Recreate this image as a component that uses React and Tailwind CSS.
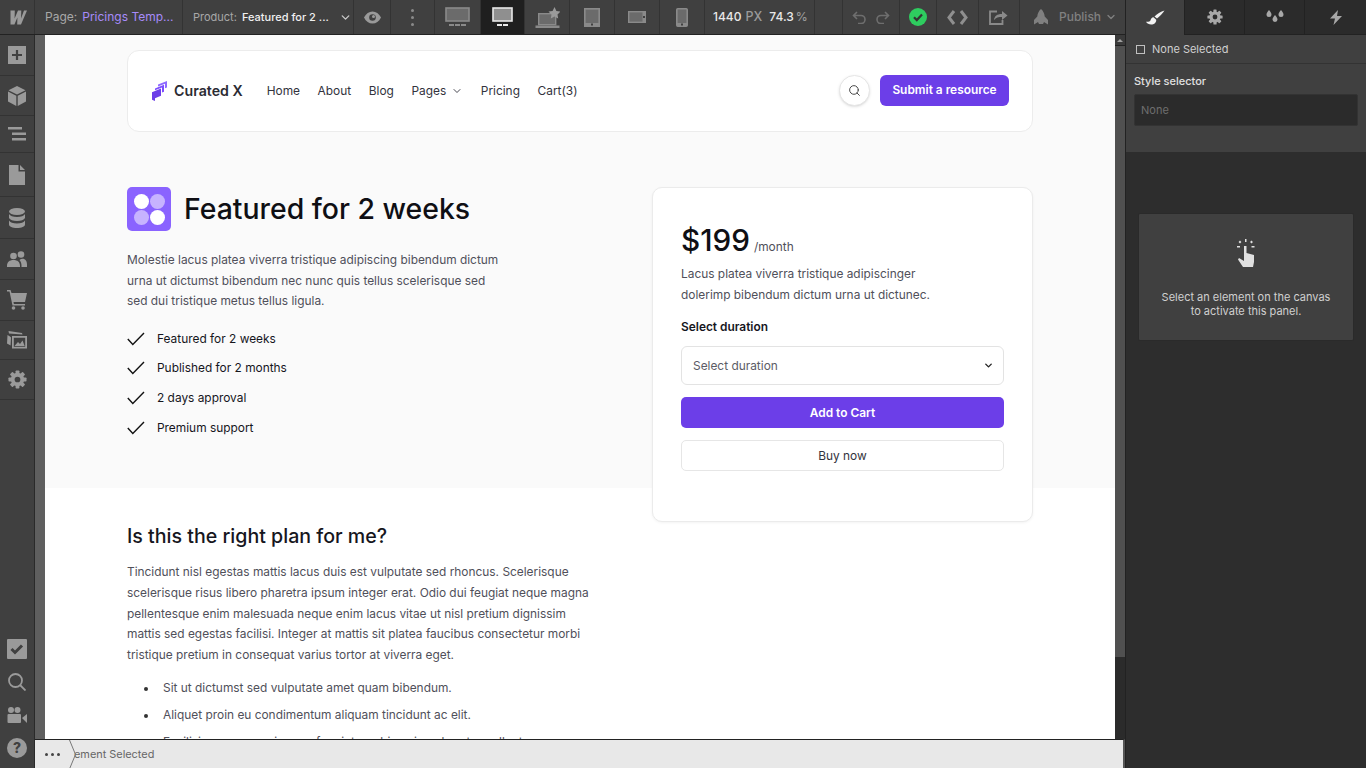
import { ChevronDown, Search } from 'lucide-react'

const ink = '[font-family:Inter,sans-serif]'

function Brush() {
  return (
    <svg width="20" height="16" viewBox="0 0 20 16" fill="#f2f2f2">
      <path d="M19.5 0.5C16 1.5 11.5 4 9.5 6.5l2.5 2C14.5 6.5 18 3 19.5 0.5z" />
      <path d="M8.5 7.3c-1.700.2-2.600 1.600-3 3-.4 1.200-2 1.600-4.500 1.500 1.500 2.400 4.500 3.300 7.200 2.400 2.200-.8 3.400-2.600 3-4.400z" />
    </svg>
  )
}

function Gear({ size = 18, color = '#9a9a9a', hole = '#404040' }) {
  const teeth = [0, 45, 90, 135]
  return (
    <svg width={size} height={size} viewBox="0 0 20 20" fill={color}>
      {teeth.map((a) => (
        <rect key={a} x="8" y="0.5" width="4" height="19" rx="0.8" transform={`rotate(${a} 10 10)`} />
      ))}
      <circle cx="10" cy="10" r="7" />
      <circle cx="10" cy="10" r="3" fill={hole} />
    </svg>
  )
}

function Screen({ w, h, children }) {
  return (
    <svg width={w} height={h} viewBox={`0 0 ${w} ${h}`} fill="none">
      {children}
    </svg>
  )
}

const breakpoints = [
  {
    width: 'w-[46px]',
    icon: (
      <Screen w={25} h={20}>
        <rect x="1" y="1" width="23" height="13" fill="#6b6b6b" stroke="#8a8a8a" strokeWidth="1.6" />
        <rect x="4" y="17" width="5" height="2" fill="#8a8a8a" />
        <rect x="10" y="17" width="5" height="2" fill="#8a8a8a" />
        <rect x="16" y="17" width="5" height="2" fill="#8a8a8a" />
      </Screen>
    ),
  },
  {
    width: 'w-[44px] bg-[#1f1f1f]',
    icon: (
      <Screen w={21} h={20}>
        <rect x="1" y="1" width="19" height="13" fill="#8f8f8f" stroke="#e8e8e8" strokeWidth="1.6" />
        <rect x="5" y="17" width="5" height="2" fill="#e8e8e8" />
        <rect x="11" y="17" width="5" height="2" fill="#e8e8e8" />
      </Screen>
    ),
  },
  {
    width: 'w-[45px]',
    icon: (
      <Screen w={25} h={21}>
        <rect x="3.7" y="6.7" width="17" height="11" fill="#6b6b6b" stroke="#8a8a8a" strokeWidth="1.4" />
        <rect x="0.5" y="18.5" width="24" height="2.5" fill="#8a8a8a" />
        <path d="M19.5 0l1.900 3.900 4.100.6-3 2.900.7 4.200-3.700-2-3.700 2 .7-4.200-3-2.900 4.100-.6z" fill="#9a9a9a" />
      </Screen>
    ),
  },
  {
    width: 'w-[45px]',
    icon: (
      <Screen w={16} h={19}>
        <rect x="0.8" y="0.8" width="14.4" height="17.4" fill="#6b6b6b" stroke="#8a8a8a" strokeWidth="1.6" />
        <rect x="1" y="15" width="14" height="3" fill="#8a8a8a" />
        <rect x="7" y="15.5" width="2" height="2" fill="#404040" />
      </Screen>
    ),
  },
  {
    width: 'w-[45px]',
    icon: (
      <Screen w={18} h={12}>
        <rect x="0.7" y="0.7" width="16.6" height="10.6" fill="#6b6b6b" stroke="#8a8a8a" strokeWidth="1.4" />
        <rect x="14.5" y="1" width="3" height="10" fill="#8a8a8a" />
        <rect x="15" y="5" width="2" height="2" fill="#404040" />
      </Screen>
    ),
  },
  {
    width: 'w-[45px]',
    icon: (
      <Screen w={12} h={19}>
        <rect x="0.8" y="0.8" width="10.4" height="17.4" rx="1" fill="#6b6b6b" stroke="#8a8a8a" strokeWidth="1.6" />
        <rect x="1" y="15" width="10" height="3" fill="#8a8a8a" />
        <rect x="5" y="15.5" width="2" height="2" fill="#404040" />
      </Screen>
    ),
  },
]

function TopBar() {
  return (
    <div className="flex h-[35px] shrink-0 border-b border-[#222222] bg-[#404040] text-[12px] leading-none whitespace-nowrap">
      <div className="flex w-[35px] shrink-0 items-center justify-center border-r border-[#333333]">
        <svg width="20" height="15" viewBox="0 0 20 15" fill="#9a9a9a">
          <path d="M3.500 0.500H7.800L7.600 8.500 11 0.500h3.300L14 8.500 17 0.500h3L14 14.500h-3.800l.2-7-3 7H3.500z" />
        </svg>
      </div>
      <div className="flex w-[148px] shrink-0 items-center gap-[5px] border-r border-[#333333] pl-[10px]">
        <span className="text-[#a8a8a8]">Page:</span>
        <span className="text-[#a78bfa]">Pricings Temp...</span>
      </div>
      <div className="flex w-[171px] shrink-0 items-center border-r border-[#333333] pl-[10px] text-[11px]">
        <span className="mr-[5px] text-[#a8a8a8]">Product:</span>
        <span className="font-medium text-[#f0f0f0]">Featured for 2 ...</span>
        <ChevronDown className="ml-[10px] text-[#c8c8c8]" size={13} strokeWidth={2.5} />
      </div>
      <div className="flex w-[37px] shrink-0 items-center justify-center border-r border-[#333333]">
        <svg width="17" height="13" viewBox="0 0 17 13">
          <path d="M0 6.5C2 2.5 5 0.5 8.500 0.5S15 2.500 17 6.500c-2 4-5 6-8.500 6S2 10.500 0 6.500z" fill="#9a9a9a" />
          <circle cx="8.500" cy="6.500" r="3.300" fill="#404040" />
          <circle cx="9.500" cy="5.500" r="1.500" fill="#9a9a9a" />
        </svg>
      </div>
      <div className="flex w-[44px] shrink-0 flex-col items-center justify-center gap-[4px] border-r border-[#333333]">
        <span className="size-[3px] rounded-full bg-[#8a8a8a]" />
        <span className="size-[3px] rounded-full bg-[#8a8a8a]" />
        <span className="size-[3px] rounded-full bg-[#8a8a8a]" />
      </div>
      {breakpoints.map((b, i) => (
        <div key={i} className={`flex shrink-0 items-center justify-center border-r border-[#333333] ${b.width}`}>
          {b.icon}
        </div>
      ))}
      <div className="flex w-[110px] shrink-0 items-center border-r border-[#333333] pl-[8px] font-medium">
        <span className="text-[#e8e8e8]">1440</span>
        <span className="ml-[4px] text-[12.500px] text-[#9a9a9a]">PX</span>
        <span className="ml-[7px] text-[#e8e8e8]">74.3</span>
        <span className="ml-[2px] text-[#9a9a9a]">%</span>
      </div>
      <div className="w-[28px] shrink-0 border-r border-[#333333]" />
      <div className="flex w-[57px] shrink-0 items-center justify-center gap-[10px] border-r border-[#333333]">
        <svg width="14" height="13" viewBox="0 0 14 13" fill="none" stroke="#6e6e6e" strokeWidth="1.6">
          <path d="M5 1L1.500 4.500 5 8M1.500 4.500H9a4 4 0 0 1 0 8H6" />
        </svg>
        <svg width="14" height="13" viewBox="0 0 14 13" fill="none" stroke="#6e6e6e" strokeWidth="1.6">
          <path d="M9 1l3.500 3.500L9 8M12.500 4.500H5a4 4 0 0 0 0 8h3" />
        </svg>
      </div>
      <div className="flex w-[37px] shrink-0 items-center justify-center border-r border-[#333333]">
        <svg width="18" height="18" viewBox="0 0 18 18">
          <circle cx="9" cy="9" r="9" fill="#2ecc5f" />
          <path d="M5 9.300l2.800 2.800L13 6.500" fill="none" stroke="#333333" strokeWidth="2.200" />
        </svg>
      </div>
      <div className="flex w-[42px] shrink-0 items-center justify-center border-r border-[#333333]">
        <svg width="21" height="15" viewBox="0 0 21 15" fill="none" stroke="#8f8f8f" strokeWidth="3">
          <path d="M7 1L2 7.500 7 14M14 1l5 6.500L14 14" />
        </svg>
      </div>
      <div className="flex w-[41px] shrink-0 items-center justify-center border-r border-[#333333]">
        <svg width="20" height="16" viewBox="0 0 20 16" fill="none" stroke="#8a8a8a" strokeWidth="1.800">
          <path d="M8 2.500H1v12.500h12.500v-4" />
          <path d="M5 11c.5-4 3-6 8-6V2l5.500 4.500L13 11V8c-3.500 0-6 .5-8 3z" fill="#8a8a8a" stroke="none" />
        </svg>
      </div>
      <div className="flex min-w-0 flex-1 items-center pl-[11px] text-[#808080]">
        <svg width="20" height="16" viewBox="0 0 20 16" fill="#808080">
          <path d="M10 0c2.300 2 3.400 4.500 3.700 7.500L17 11v4.500l-4-2.500-1 2H8l-1-2-4 2.500V11l3.300-3.500C6.600 4.500 7.700 2 10 0z" />
        </svg>
        <span className="ml-[8px] font-medium">Publish</span>
        <ChevronDown className="ml-[4px]" size={12} strokeWidth={2.500} />
      </div>
    </div>
  )
}

const sideIcons = [
  {
    h: 'h-[41px]',
    icon: (
      <svg width="18" height="18" viewBox="0 0 18 18">
        <rect width="18" height="18" fill="#9a9a9a" />
        <path d="M9 4v10M4 9h10" stroke="#404040" strokeWidth="2.200" />
      </svg>
    ),
  },
  {
    h: 'h-[40px]',
    icon: (
      <svg width="18" height="20" viewBox="0 0 18 20" fill="#9a9a9a">
        <path d="M9 0l8.500 4.200L9 8.500.5 4.200zM0 5.500l8.300 4.200V20L0 15.500zM18 5.500l-8.300 4.200V20l8.300-4.500z" />
      </svg>
    ),
  },
  {
    h: 'h-[37px]',
    icon: (
      <svg width="18" height="14" viewBox="0 0 18 14" fill="#9a9a9a">
        <rect x="0" y="0" width="14" height="2.500" />
        <rect x="4" y="5.500" width="14" height="2.500" />
        <rect x="4" y="11" width="14" height="2.500" />
      </svg>
    ),
  },
  {
    h: 'h-[44px]',
    icon: (
      <svg width="16" height="20" viewBox="0 0 16 20" fill="#9a9a9a">
        <path d="M0 0h9.500v6.500H16V20H0zM11 0l5 5h-5z" />
      </svg>
    ),
  },
  {
    h: 'h-[42px]',
    icon: (
      <svg width="16" height="20" viewBox="0 0 16 20" fill="#9a9a9a">
        <ellipse cx="8" cy="3.500" rx="8" ry="3.500" />
        <path d="M0 6c1 2 4 3 8 3s7-1 8-3v4c-1 2-4 3-8 3s-7-1-8-3zM0 12.500c1 2 4 3 8 3s7-1 8-3v4C16 18.500 12.500 20 8 20s-8-1.500-8-3.500z" />
      </svg>
    ),
  },
  {
    h: 'h-[41px]',
    icon: (
      <svg width="20" height="16" viewBox="0 0 20 16" fill="#9a9a9a">
        <circle cx="6.500" cy="5" r="3.300" />
        <circle cx="14" cy="3.500" r="3.300" />
        <path d="M0 15c0-4 2.500-6 6.500-6s6.500 2 6.500 6v1H0zM14.500 16V14.500c0-2-.7-4-2-5.500 1-.8 2-1.200 3-1.200 3 0 4.500 2.500 4.500 5.500V16z" />
      </svg>
    ),
  },
  {
    h: 'h-[41px]',
    icon: (
      <svg width="20" height="20" viewBox="0 0 20 20" fill="#9a9a9a">
        <path d="M0 0h3.500l1 3H20l-2 9H6.500l.4 2H18v1.500H5.500L2.500 1.500H0z" />
        <circle cx="6.500" cy="18" r="1.800" />
        <circle cx="16" cy="18" r="1.800" />
      </svg>
    ),
  },
  {
    h: 'h-[39px]',
    icon: (
      <svg width="20" height="18" viewBox="0 0 20 18" fill="#9a9a9a">
        <path d="M3 5.500l1 1-.4 8L0 12.500l.5-8.500z M2 2.500L1.500 0 15 2l.5 1.500z" />
        <path d="M5 5h15v12.500H5zM6.800 6.800v9h11.400v-9z" />
        <path d="M7.500 15l3.500-4 2 2 2.500-3.500 2.200 5.500z" />
      </svg>
    ),
  },
  { h: 'h-[40px]', icon: <Gear size={19} /> },
]

const bottomIcons = [
  <svg key="a" width="20" height="20" viewBox="0 0 20 20">
    <rect width="20" height="20" rx="1" fill="#9a9a9a" />
    <path d="M4.500 10l3.500 3.500 7-7" fill="none" stroke="#404040" strokeWidth="3" />
  </svg>,
  <svg key="b" width="18" height="18" viewBox="0 0 18 18" fill="none" stroke="#9a9a9a" strokeWidth="1.800">
    <circle cx="7.500" cy="7.500" r="6.500" />
    <path d="M12 12l5.500 5.500" />
  </svg>,
  <svg key="c" width="20" height="16" viewBox="0 0 20 16" fill="#9a9a9a">
    <circle cx="4" cy="3" r="3" />
    <circle cx="10.500" cy="3" r="3" />
    <rect x="0.500" y="7" width="13.500" height="9" rx="1" />
    <path d="M15 11l5-4v9z" />
  </svg>,
  <svg key="d" width="20" height="20" viewBox="0 0 20 20">
    <circle cx="10" cy="10" r="10" fill="#9a9a9a" />
    <text x="10" y="15" textAnchor="middle" fontSize="14" fontWeight="800" fontFamily="Inter, sans-serif" fill="#404040">?</text>
  </svg>,
]

function SideBar() {
  return (
    <div className="flex w-[35px] shrink-0 flex-col border-r border-[#2a2a2a] bg-[#404040]">
      {sideIcons.map((s, i) => (
        <div key={i} className={`flex shrink-0 items-center justify-center border-b border-[#333333] ${s.h}`}>
          {s.icon}
        </div>
      ))}
      <div className="mt-auto flex flex-col pb-[4px]">
        {bottomIcons.map((icon, i) => (
          <div key={i} className="flex h-[33px] items-center justify-center">
            {icon}
          </div>
        ))}
      </div>
    </div>
  )
}

const features = ['Featured for 2 weeks', 'Published for 2 months', '2 days approval', 'Premium support']
const bullets = [
  'Sit ut dictumst sed vulputate amet quam bibendum.',
  'Aliquet proin eu condimentum aliquam tincidunt ac elit.',
  'Facilisis congue orci purus feugiat morbi sapien pharetra pellentesque.',
]

function Canvas() {
  return (
    <div className="min-w-0 flex-1 overflow-hidden bg-white text-[11.900px] text-[#50505a]">
      <div className="h-[453px] bg-[#fafafa] px-[82px] pt-[15px]">
        <div className="flex h-[82px] items-center rounded-[12px] border border-[#ececec] bg-white pl-[24px] pr-[23px]">
          <svg width="16" height="20" viewBox="0 0 16 20">
            <path d="M6 3.600L15 0v6.500l-2 .8V2.800L6 5.400z" fill="#8f6bff" />
            <path d="M3 7.400L12 3.800v7l-2 .8V6.600L3 9.200z" fill="#7c4dff" />
            <path d="M0 11.200L9 7.600v7.200l-6 2.400V20L0 18.800z" fill="#6c3ee8" />
          </svg>
          <span className="ml-[6px] text-[14.200px] font-semibold text-[#2b2b33]">Curated X</span>
          <nav className="ml-[24px] flex items-center gap-[17.600px] text-[#33333d]">
            <span>Home</span>
            <span>About</span>
            <span>Blog</span>
            <span className="flex items-center gap-[5px]">
              Pages
              <ChevronDown size={12} strokeWidth={1.800} />
            </span>
            <span>Pricing</span>
            <span>Cart(3)</span>
          </nav>
          <div className="mb-[2px] ml-auto flex items-center gap-[10px]">
            <div className="flex size-[31px] items-center justify-center rounded-full border border-[#e6e6e6] bg-white shadow-sm">
              <Search size={13} strokeWidth={1.800} className="text-[#444444]" />
            </div>
            <div className="flex h-[31px] w-[129px] items-center justify-center rounded-[6px] bg-[#6c3ee8] font-semibold text-white">
              Submit a resource
            </div>
          </div>
        </div>
        <div className="mt-[55px] flex justify-between">
          <div className="w-[372px]">
            <div className="flex items-center gap-[13px]">
              <div className="grid size-[44px] grid-cols-2 content-center justify-center gap-[1px] rounded-[5px] bg-[#8a63ff] px-[7px]">
                <span className="size-[15px] rounded-full bg-white" />
                <span className="size-[15px] rounded-full bg-[#c7b3ff]" />
                <span className="size-[15px] rounded-full bg-[#c7b3ff]" />
                <span className="size-[15px] rounded-full bg-white" />
              </div>
              <h1 className="pt-[1px] text-[28.400px] leading-none font-medium text-[#0f0f14]">Featured for 2 weeks</h1>
            </div>
            <p className="mt-[19px] leading-[20.500px]">
              Molestie lacus platea viverra tristique adipiscing bibendum dictum urna ut dictumst bibendum nec nunc quis tellus scelerisque sed sed dui tristique metus tellus ligula.
            </p>
            <ul className="mt-[17px] flex flex-col gap-[9.700px]">
              {features.map((f) => (
                <li key={f} className="flex h-[20px] items-center gap-[12px] text-[#16161d]">
                  <svg width="18" height="14" viewBox="0 0 18 14" fill="none" stroke="#111111" strokeWidth="1.400">
                    <path d="M0.800 7l5 5.500L17 1" />
                  </svg>
                  {f}
                </li>
              ))}
            </ul>
          </div>
          <div className="relative z-10 h-[335px] w-[381px] rounded-[10px] border border-[#ebebeb] bg-white px-[28px] pt-[34px] shadow-[0_1px_3px_rgba(0,0,0,0.05)]">
            <div className="flex items-baseline gap-[4px]">
              <span className="text-[29.700px] leading-[36px] font-medium text-[#0f0f14]">$199</span>
              <span>/month</span>
            </div>
            <p className="mt-[6px] leading-[20.800px]">
              Lacus platea viverra tristique adipiscinger
              <br />
              dolerimp bibendum dictum urna ut dictunec.
            </p>
            <div className="mt-[12px] font-semibold text-[#16161d]">Select duration</div>
            <div className="mt-[11px] flex h-[39px] items-center justify-between rounded-[6px] border border-[#e3e3e3] pl-[11px] pr-[9px] text-[#5c5c66]">
              Select duration
              <ChevronDown size={11} strokeWidth={3} className="text-[#222222]" />
            </div>
            <div className="mt-[12px] flex h-[31px] items-center justify-center rounded-[5px] bg-[#6c3ee8] font-semibold text-white">
              Add to Cart
            </div>
            <div className="mt-[12px] flex h-[31px] items-center justify-center rounded-[5px] border border-[#e6e6e6] bg-white text-[#33333d]">
              Buy now
            </div>
          </div>
        </div>
      </div>
      <div className="w-[550px] pl-[82px] pt-[35px]">
        <h2 className="text-[19.600px] leading-[26px] font-medium text-[#16161d]">Is this the right plan for me?</h2>
        <p className="mt-[13px] w-[465px] leading-[20.800px]">
          Tincidunt nisl egestas mattis lacus duis est vulputate sed rhoncus. Scelerisque scelerisque risus libero pharetra ipsum integer erat. Odio dui feugiat neque magna pellentesque enim malesuada neque enim lacus vitae ut nisl pretium dignissim mattis sed egestas facilisi. Integer at mattis sit platea faucibus consectetur morbi tristique pretium in consequat varius tortor at viverra eget.
        </p>
        <ul className="mt-[12px] flex flex-col gap-[6px] pl-[17px] leading-[20.800px]">
          {bullets.map((b) => (
            <li key={b} className="flex gap-[15px] whitespace-nowrap">
              <span className="mt-[9px] size-[4px] shrink-0 rounded-full bg-[#333333]" />
              {b}
            </li>
          ))}
        </ul>
      </div>
    </div>
  )
}

function ScrollBar() {
  return (
    <div className="flex w-[10px] shrink-0 flex-col bg-[#2b2b2b]">
      <div className="flex h-[11px] items-center justify-center border-b border-[#222222] bg-[#3a3a3a]">
        <div className="h-0 w-0 border-x-[3px] border-b-[3px] border-x-transparent border-b-[#a0a0a0]" />
      </div>
      <div className="h-[611px] bg-[#505050]" />
    </div>
  )
}

function StatusBar() {
  return (
    <div className="relative flex h-[29px] shrink-0 items-center overflow-hidden border-t border-r-2 border-t-[#222222] border-r-[#555555] bg-[#e8e8e8] text-[10.900px] text-[#666666]">
      <div className="flex w-[34px] items-center justify-center gap-[3px]">
        <span className="size-[3px] rounded-full bg-[#444444]" />
        <span className="size-[3px] rounded-full bg-[#444444]" />
        <span className="size-[3px] rounded-full bg-[#444444]" />
      </div>
      <span className="ml-[5px]">ement Selected</span>
      <svg className="absolute left-[34px] top-0" width="8" height="29" viewBox="0 0 8 29" fill="none" stroke="#777777">
        <path d="M0.500 0l6 14.500-6 14.500" />
      </svg>
    </div>
  )
}

function RightPanel() {
  const tabs = [
    { w: 'w-[58px]', icon: <Brush /> },
    { w: 'w-[60px]', icon: <Gear size={16} color="#a8a8a8" hole="#2b2b2b" /> },
    {
      w: 'w-[60px]',
      icon: (
        <svg width="18" height="14" viewBox="0 0 18 14" fill="#a8a8a8">
          <path d="M3 0c1.500 2 2.500 3 2.500 4.500a2.500 2.500 0 0 1-5 0C.5 3 1.500 2 3 0zM15 0c1.500 2 2.500 3 2.500 4.500a2.500 2.500 0 0 1-5 0C12.500 3 13.500 2 15 0zM9 5c1.500 2 2.500 3 2.500 4.500a2.500 2.500 0 0 1-5 0C6.500 8 7.500 7 9 5z" />
        </svg>
      ),
    },
    {
      w: 'flex-1',
      icon: (
        <svg width="12" height="15" viewBox="0 0 12 15" fill="#a8a8a8">
          <path d="M8 0L0 8.500h5L3.500 15 12 6H7z" />
        </svg>
      ),
    },
  ]
  return (
    <div className="flex w-[241px] shrink-0 flex-col border-l border-[#222222] bg-[#2d2d2d] text-[11px]">
      <div className="flex h-[35px] shrink-0">
        {tabs.map((t, i) => (
          <div
            key={i}
            className={`flex items-center justify-center ${t.w} ${i === 0 ? 'bg-[#404040]' : 'border-b border-l border-[#222222] bg-[#2b2b2b]'}`}
          >
            {t.icon}
          </div>
        ))}
      </div>
      <div className="flex h-[29px] items-center gap-[7px] border-b border-[#333333] bg-[#404040] pl-[10px] pt-[1px] text-[#d0d0d0]">
        <span className="size-[9px] border border-[#c0c0c0]" />
        None Selected
      </div>
      <div className="h-[88px] bg-[#404040] px-[8px] pt-[9px]">
        <div className="font-medium leading-[16px] text-[#e0e0e0]">Style selector</div>
        <div className="mt-[5px] flex h-[32px] items-center rounded-[2px] border border-[#333333] bg-[#2b2b2b] pl-[6px] text-[#6e6e6e]">None</div>
      </div>
      <div className="mx-[12px] mt-[61px] flex h-[128px] flex-col items-center rounded-[2px] border border-[#2a2a2a] bg-[#404040] pt-[25px] text-center leading-[14px] text-[#d0d0d0]">
        <svg width="20" height="29" viewBox="0 0 20 29" fill="#e0e0e0">
          <rect x="9" y="0" width="1.500" height="3" />
          <rect x="1" y="7" width="3" height="1.500" />
          <rect x="15.500" y="7" width="3" height="1.500" />
          <rect x="3" y="2" width="2" height="2" transform="rotate(45 4 3)" />
          <rect x="14.500" y="2" width="2" height="2" transform="rotate(45 15.500 3)" />
          <path d="M8 7h2.500v7l7.500 2v7l-1 5H7L2 20.500l1-1.500 5 3z" />
        </svg>
        <div className="mt-[22px]">
          Select an element on the canvas
          <br />
          to activate this panel.
        </div>
      </div>
    </div>
  )
}

export default function App() {
  return (
    <div className={`flex h-screen w-full overflow-hidden bg-[#2d2d2d] ${ink}`}>
      <div className="flex min-w-0 flex-1 flex-col">
        <TopBar />
        <div className="flex min-h-0 flex-1">
          <SideBar />
          <div className="flex min-w-0 flex-1 flex-col">
            <div className="flex min-h-0 flex-1">
              <div className="w-[10px] shrink-0 bg-[#5f5f5f]" />
              <Canvas />
              <ScrollBar />
            </div>
            <StatusBar />
          </div>
        </div>
      </div>
      <RightPanel />
    </div>
  )
}
